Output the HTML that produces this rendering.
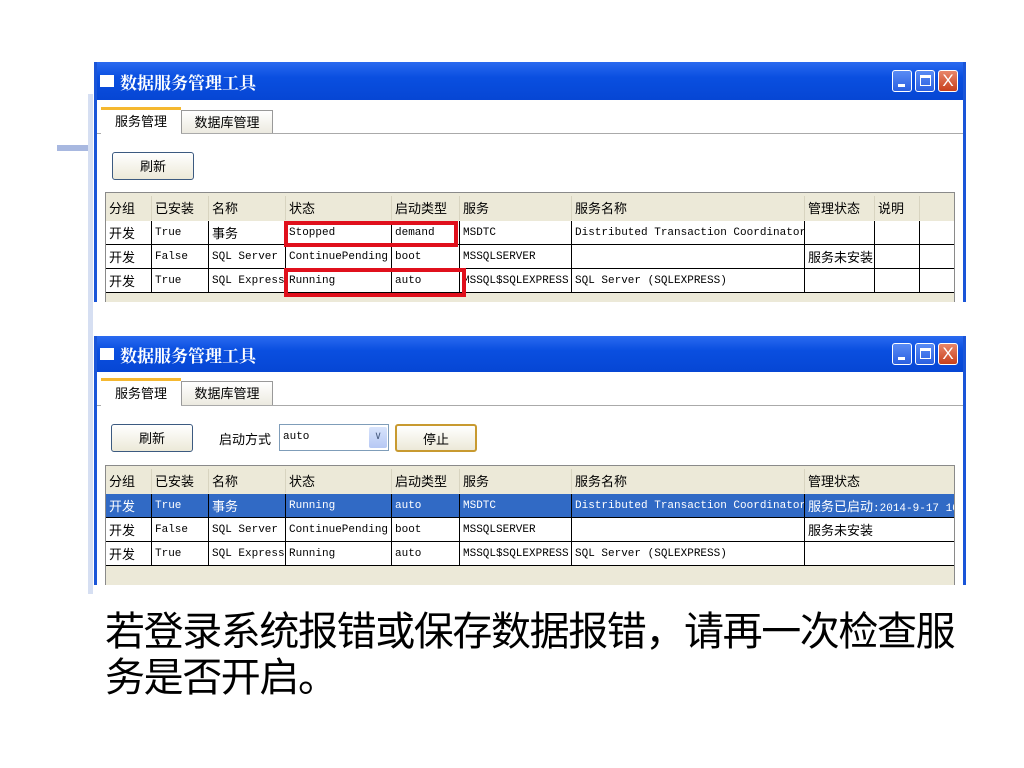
<!DOCTYPE html>
<html><head><meta charset="utf-8"><style>
*{margin:0;padding:0;box-sizing:border-box}
body{width:1024px;height:768px;background:#fff;position:relative;overflow:hidden;font-family:"Liberation Sans","Noto Sans CJK SC",sans-serif}
.a{position:absolute}
.win{position:absolute;left:94px;width:872px;background:#fff;border-left:3px solid #1a55d8;border-right:3px solid #1a55d8;overflow:hidden}
.tb{position:absolute;left:0;top:0;right:0;background:linear-gradient(#2a6af0,#0a4fe0 40%,#0646d4);color:#fff;font-weight:bold;font-size:17px;font-family:"Noto Serif CJK SC","Noto Sans CJK SC",serif}
.tb .ico{position:absolute;left:3px;width:14px;height:12px;background:#fff}
.tb .t{position:absolute;left:23px}
.btn3{position:absolute;width:20px;height:22px;border:1px solid #fff;border-radius:3px;background:linear-gradient(#5a8cf5,#2a5fe0)}
.tab{position:absolute;font-size:13px;color:#000;font-family:"Noto Sans CJK SC",sans-serif;text-align:center}
.grid{position:absolute;left:8px;right:8px;background:#ece9d8;border:1px solid #8a8a8a;overflow:hidden}
.c{position:absolute;font-size:11px;font-family:"Liberation Mono","Noto Sans CJK SC",monospace;white-space:nowrap;overflow:hidden;padding-left:3px;line-height:25px;height:24px;border-left:1px solid #000;border-bottom:1px solid #000;background:#fff}
.h{position:absolute;font-size:13px;font-family:"Noto Sans CJK SC",sans-serif;white-space:nowrap;padding-left:3px;line-height:24px;border-left:1px solid #d8d4c0}
.cz{font-family:"Noto Sans CJK SC",sans-serif;font-size:13px;line-height:23px}
.sel{background:#316ac5;color:#fff}
.pb{position:absolute;height:28px;border:1px solid #3c5a80;border-radius:3px;background:linear-gradient(#fff,#ece9d8);font-size:13px;text-align:center;line-height:26px;font-family:"Noto Sans CJK SC",sans-serif}
.red{position:absolute;border:4px solid #e0101c}
</style></head><body>
<div class="a" style="left:57px;top:145px;width:34px;height:6px;background:#a8b8e0"></div>
<div class="a" style="left:88px;top:94px;width:5px;height:500px;background:#d6dff2"></div>

<!-- window 1 -->
<div class="win" style="top:62px;height:240px">
 <div class="tb" style="height:38px"><div class="ico" style="top:13px"></div><div class="t" style="top:7px">数据服务管理工具</div>
  <div class="btn3" style="left:795px;top:8px"><div class="a" style="left:5px;top:13px;width:7px;height:3px;background:#fff"></div></div>
  <div class="btn3" style="left:818px;top:8px"><div class="a" style="left:4px;top:4px;width:11px;height:11px;border:1px solid #fff;border-top:3px solid #fff"></div></div>
  <div class="btn3" style="left:841px;top:8px;background:linear-gradient(#e8866a,#c8401c);color:#fff;font-size:17px;font-weight:normal;text-align:center;line-height:20px;font-family:'Liberation Sans'">X</div>
 </div>
 <div class="a" style="left:0;right:0;top:71px;height:1px;background:#aaa"></div>
 <div class="tab" style="left:4px;top:45px;width:80px;height:27px;background:#fff;border-top:3px solid #f5b830;line-height:22px">服务管理</div>
 <div class="tab" style="left:84px;top:48px;width:92px;height:23px;background:linear-gradient(#fff,#eceae0);border:1px solid #999;border-bottom:none;line-height:21px">数据库管理</div>
 <div class="pb" style="left:15px;top:90px;width:82px">刷新</div>
 <div class="grid" style="top:130px;height:112px">
  <div class="h" style="left:0;top:3px;border:none">分组</div>
  <div class="h" style="left:45px;top:3px">已安装</div>
  <div class="h" style="left:102px;top:3px">名称</div>
  <div class="h" style="left:179px;top:3px">状态</div>
  <div class="h" style="left:285px;top:3px">启动类型</div>
  <div class="h" style="left:353px;top:3px">服务</div>
  <div class="h" style="left:465px;top:3px">服务名称</div>
  <div class="h" style="left:698px;top:3px">管理状态</div>
  <div class="h" style="left:768px;top:3px">说明</div>
  <div class="h" style="left:813px;top:3px;height:24px"></div>
  <div class="c cz" style="left:0;top:28px;width:45px;border-left:none">开发</div>
  <div class="c" style="left:45px;top:28px;width:57px">True</div>
  <div class="c cz" style="left:102px;top:28px;width:77px">事务</div>
  <div class="c" style="left:179px;top:28px;width:106px">Stopped</div>
  <div class="c" style="left:285px;top:28px;width:68px">demand</div>
  <div class="c" style="left:353px;top:28px;width:112px">MSDTC</div>
  <div class="c" style="left:465px;top:28px;width:233px">Distributed Transaction Coordinator</div>
  <div class="c" style="left:698px;top:28px;width:70px"></div>
  <div class="c" style="left:768px;top:28px;width:45px"></div>
  <div class="c" style="left:813px;top:28px;width:36px"></div>

  <div class="c cz" style="left:0;top:52px;width:45px;border-left:none">开发</div>
  <div class="c" style="left:45px;top:52px;width:57px">False</div>
  <div class="c" style="left:102px;top:52px;width:77px">SQL Server</div>
  <div class="c" style="left:179px;top:52px;width:106px">ContinuePending</div>
  <div class="c" style="left:285px;top:52px;width:68px">boot</div>
  <div class="c" style="left:353px;top:52px;width:112px">MSSQLSERVER</div>
  <div class="c" style="left:465px;top:52px;width:233px"></div>
  <div class="c cz" style="left:698px;top:52px;width:70px">服务未安装</div>
  <div class="c" style="left:768px;top:52px;width:45px"></div>
  <div class="c" style="left:813px;top:52px;width:36px"></div>

  <div class="c cz" style="left:0;top:76px;width:45px;border-left:none">开发</div>
  <div class="c" style="left:45px;top:76px;width:57px">True</div>
  <div class="c" style="left:102px;top:76px;width:77px">SQL Express</div>
  <div class="c" style="left:179px;top:76px;width:106px">Running</div>
  <div class="c" style="left:285px;top:76px;width:68px">auto</div>
  <div class="c" style="left:353px;top:76px;width:112px">MSSQL$SQLEXPRESS</div>
  <div class="c" style="left:465px;top:76px;width:233px">SQL Server (SQLEXPRESS)</div>
  <div class="c" style="left:698px;top:76px;width:70px"></div>
  <div class="c" style="left:768px;top:76px;width:45px"></div>
  <div class="c" style="left:813px;top:76px;width:36px"></div>
 </div>
</div>
<div class="red" style="left:284px;top:221px;width:174px;height:26px"></div>
<div class="red" style="left:284px;top:268px;width:182px;height:29px"></div>

<!-- window 2 -->
<div class="win" style="top:336px;height:249px">
 <div class="tb" style="height:36px"><div class="ico" style="top:12px"></div><div class="t" style="top:6px">数据服务管理工具</div>
  <div class="btn3" style="left:795px;top:7px"><div class="a" style="left:5px;top:13px;width:7px;height:3px;background:#fff"></div></div>
  <div class="btn3" style="left:818px;top:7px"><div class="a" style="left:4px;top:4px;width:11px;height:11px;border:1px solid #fff;border-top:3px solid #fff"></div></div>
  <div class="btn3" style="left:841px;top:7px;background:linear-gradient(#e8866a,#c8401c);color:#fff;font-size:17px;font-weight:normal;text-align:center;line-height:20px;font-family:'Liberation Sans'">X</div>
 </div>
 <div class="a" style="left:0;right:0;top:69px;height:1px;background:#aaa"></div>
 <div class="tab" style="left:4px;top:42px;width:80px;height:28px;background:#fff;border-top:3px solid #f5b830;line-height:23px">服务管理</div>
 <div class="tab" style="left:84px;top:45px;width:92px;height:24px;background:linear-gradient(#fff,#eceae0);border:1px solid #999;border-bottom:none;line-height:22px">数据库管理</div>
 <div class="pb" style="left:14px;top:88px;width:82px">刷新</div>
 <div class="a" style="left:122px;top:93px;font-size:13px;font-family:'Noto Sans CJK SC',sans-serif">启动方式</div>
 <div class="a" style="left:182px;top:88px;width:110px;height:27px;border:1px solid #7f9db9;background:#fff;font-size:11px;font-family:'Liberation Mono',monospace;line-height:25px;padding-left:3px">auto<div class="a" style="right:1px;top:2px;width:18px;height:21px;background:linear-gradient(#d8e4fc,#b6c8f4);border-radius:2px;color:#4d6185;font-size:11px;text-align:center;line-height:21px">&#8744;</div></div>
 <div class="pb" style="left:298px;top:88px;width:82px;border:2px solid #c89a30">停止</div>
 <div class="grid" style="top:129px;height:122px">
  <div class="h" style="left:0;top:3px;border:none">分组</div>
  <div class="h" style="left:45px;top:3px">已安装</div>
  <div class="h" style="left:102px;top:3px">名称</div>
  <div class="h" style="left:179px;top:3px">状态</div>
  <div class="h" style="left:285px;top:3px">启动类型</div>
  <div class="h" style="left:353px;top:3px">服务</div>
  <div class="h" style="left:465px;top:3px">服务名称</div>
  <div class="h" style="left:698px;top:3px">管理状态</div>

  <div class="c cz sel" style="left:0;top:28px;width:45px;border-left:none">开发</div>
  <div class="c sel" style="left:45px;top:28px;width:57px">True</div>
  <div class="c cz sel" style="left:102px;top:28px;width:77px">事务</div>
  <div class="c sel" style="left:179px;top:28px;width:106px">Running</div>
  <div class="c sel" style="left:285px;top:28px;width:68px">auto</div>
  <div class="c sel" style="left:353px;top:28px;width:112px">MSDTC</div>
  <div class="c sel" style="left:465px;top:28px;width:233px">Distributed Transaction Coordinator</div>
  <div class="c sel" style="left:698px;top:28px;width:160px"><span class="cz">服务已启动</span>:2014-9-17 10</div>

  <div class="c cz" style="left:0;top:52px;width:45px;border-left:none">开发</div>
  <div class="c" style="left:45px;top:52px;width:57px">False</div>
  <div class="c" style="left:102px;top:52px;width:77px">SQL Server</div>
  <div class="c" style="left:179px;top:52px;width:106px">ContinuePending</div>
  <div class="c" style="left:285px;top:52px;width:68px">boot</div>
  <div class="c" style="left:353px;top:52px;width:112px">MSSQLSERVER</div>
  <div class="c" style="left:465px;top:52px;width:233px"></div>
  <div class="c cz" style="left:698px;top:52px;width:160px">服务未安装</div>

  <div class="c cz" style="left:0;top:76px;width:45px;border-left:none">开发</div>
  <div class="c" style="left:45px;top:76px;width:57px">True</div>
  <div class="c" style="left:102px;top:76px;width:77px">SQL Express</div>
  <div class="c" style="left:179px;top:76px;width:106px">Running</div>
  <div class="c" style="left:285px;top:76px;width:68px">auto</div>
  <div class="c" style="left:353px;top:76px;width:112px">MSSQL$SQLEXPRESS</div>
  <div class="c" style="left:465px;top:76px;width:233px">SQL Server (SQLEXPRESS)</div>
  <div class="c" style="left:698px;top:76px;width:160px"></div>
 </div>
</div>

<div class="a" style="left:105px;top:609px;width:900px;font-size:40px;line-height:46px;letter-spacing:-1.4px;color:#000;font-family:'Liberation Sans','Noto Sans CJK SC',sans-serif">若登录系统报错或保存数据报错，请再一次检查服<br>务是否开启。</div>
</body></html>
